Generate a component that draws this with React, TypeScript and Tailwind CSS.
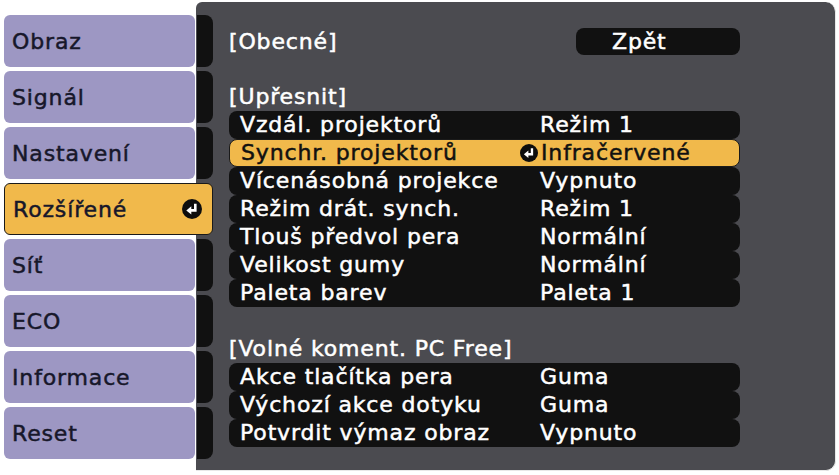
import React from 'react';

const menu = ['Obraz', 'Signál', 'Nastavení', 'Rozšířené', 'Síť', 'ECO', 'Informace', 'Reset'];
const selectedMenu = 'Rozšířené';

type Row = { label: string; value: string; active?: boolean };

const advanced: Row[] = [
    { label: 'Vzdál. projektorů', value: 'Režim 1' },
    { label: 'Synchr. projektorů', value: 'Infračervené', active: true },
    { label: 'Vícenásobná projekce', value: 'Vypnuto' },
    { label: 'Režim drát. synch.', value: 'Režim 1' },
    { label: 'Tlouš předvol pera', value: 'Normální' },
    { label: 'Velikost gumy', value: 'Normální' },
    { label: 'Paleta barev', value: 'Paleta 1' },
];

const pcFree: Row[] = [
    { label: 'Akce tlačítka pera', value: 'Guma' },
    { label: 'Výchozí akce dotyku', value: 'Guma' },
    { label: 'Potvrdit výmaz obraz', value: 'Vypnuto' },
];

// round black "enter" badge
const EnterIcon = ({ size }: { size: number }) => (
    <svg width={size} height={size} viewBox="0 0 20 20" className="shrink-0">
        <circle cx="10" cy="10" r="10" fill="#0d0d0d" />
        <path d="M13.3 4.8 V11.4 H8.5" stroke="#fff" strokeWidth="2.6" fill="none" />
        <polygon points="4.3,11.4 9.3,7.2 9.3,15.6" fill="#fff" />
    </svg>
);

const SettingRow = ({ row }: { row: Row }) => (
    <div
        className={`flex items-center h-[28px] w-[511px] rounded-[8px] pl-[11px] ${row.active
            ? 'bg-[#f1b94b] text-[#111] border border-[#1a1a1a]'
            : 'bg-[#111111] text-white'
            }`}
    >
        <span className="w-[279px] shrink-0 leading-none">{row.label}</span>
        <span className="w-[21px] shrink-0 flex items-center">{row.active && <EnterIcon size={18} />}</span>
        <span className="leading-none">{row.value}</span>
    </div>
);

const App: React.FC = () => {
    return (
        <div
            className="w-[839px] h-[475px] bg-white flex font-normal text-[22px] tracking-[0.85px] [-webkit-text-stroke:0.5px] overflow-hidden"
            style={{ fontFamily: '"DejaVu Sans", "Noto Sans", sans-serif' }}
        >
            {/* Left menu */}
            <div className="flex flex-col gap-[4px] pt-[15px] pl-[4px] w-[196px] shrink-0">
                {menu.map(item =>
                    item === selectedMenu ? (
                        <div
                            key={item}
                            className="relative z-10 h-[52px] w-[209px] rounded-[6px] bg-[#f1b94b] border border-[#1a1a1a] flex items-center justify-between pl-[8px] pr-[10px] text-[#17172a]"
                        >
                            <span>{item}</span>
                            <EnterIcon size={20} />
                        </div>
                    ) : (
                        <div
                            key={item}
                            className="h-[52px] w-[191px] rounded-[6px] bg-[#9d97c3] flex items-center pl-[8px] text-[#17172a]"
                        >
                            {item}
                        </div>
                    )
                )}
            </div>

            {/* Settings panel */}
            <div className="mt-[2px] h-[469px] w-[640px] bg-[#4b4b50] rounded-tl-[6px] rounded-br-[10px] rounded-tr-[10px] border-r border-b border-[#e8e8e8] flex pl-[1px]">
                <div className="flex flex-col gap-[4px] pt-[13px] w-[16px] shrink-0">
                    {menu.map(item => (
                        <div key={item} className="h-[52px] w-[16px] bg-[#111111] rounded-r-[8px]" />
                    ))}
                </div>

                <div className="flex flex-col pl-[16px] pt-[26px] text-white">
                    <div className="flex items-center h-[27px] w-[511px]">
                        <span className="w-[347px] leading-none">[Obecné]</span>
                        <div className="h-[27px] w-[164px] bg-[#111111] rounded-[8px] flex items-center pl-[36px] leading-none">
                            Zpět
                        </div>
                    </div>

                    <div className="h-[28px] mt-[28px] flex items-center leading-none">[Upřesnit]</div>
                    <div className="flex flex-col">
                        {advanced.map(r => (
                            <SettingRow key={r.label} row={r} />
                        ))}
                    </div>

                    <div className="h-[28px] mt-[28px] flex items-center leading-none">[Volné koment. PC Free]</div>
                    <div className="flex flex-col">
                        {pcFree.map(r => (
                            <SettingRow key={r.label} row={r} />
                        ))}
                    </div>
                </div>
            </div>
        </div>
    );
};

export default App;
